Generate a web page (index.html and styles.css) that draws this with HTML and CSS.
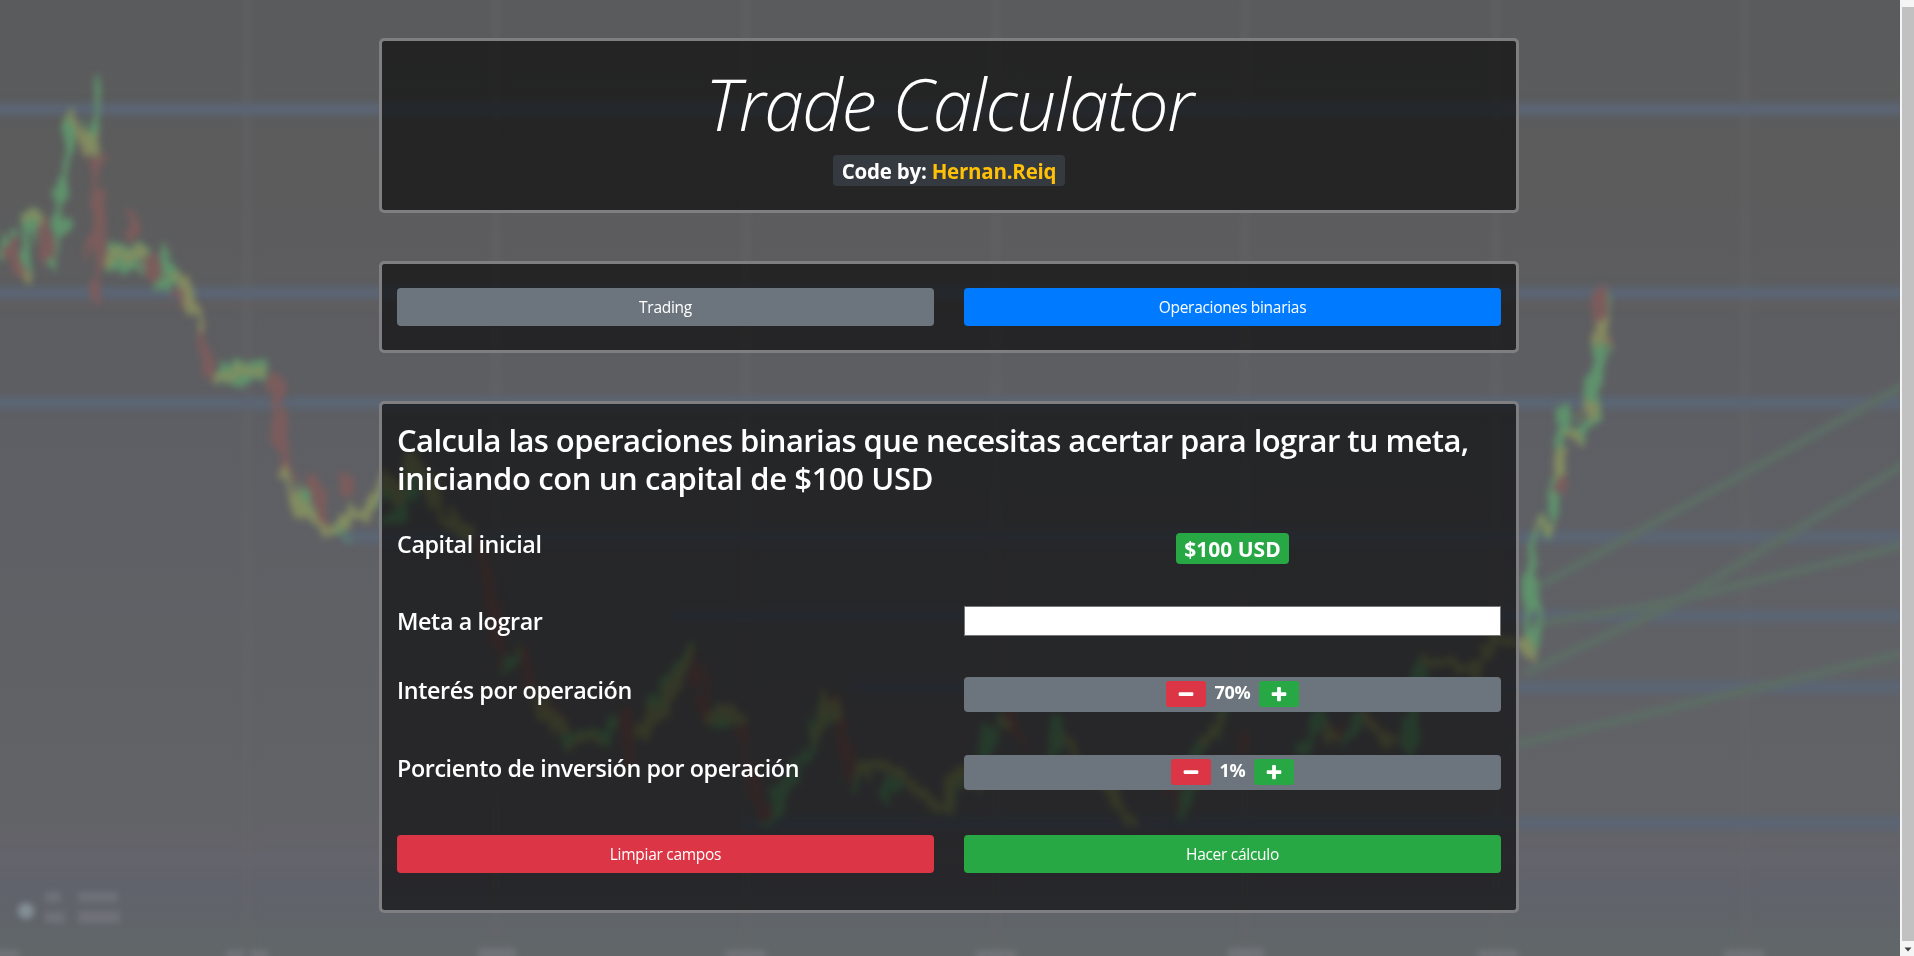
FILE: index.html
```
<!DOCTYPE html>
<html lang="es">
<head>
<meta charset="utf-8">
<title>Trade Calculator</title>
<link rel="stylesheet" href="styles.css">
</head>
<body>
<svg class="backdrop" viewBox="0 0 1900 956" preserveAspectRatio="none" aria-hidden="true">
  <defs>
    <linearGradient id="sky" x1="0" y1="0" x2="0" y2="1">
      <stop offset="0" stop-color="#5a5b5c"/>
      <stop offset=".2" stop-color="#5c5c5d"/>
      <stop offset=".45" stop-color="#5e5f64"/>
      <stop offset=".85" stop-color="#626367"/>
      <stop offset=".9" stop-color="#64636b"/>
      <stop offset=".93" stop-color="#60636b"/>
      <stop offset="1" stop-color="#616769"/>
    </linearGradient>
    <filter id="soft" color-interpolation-filters="sRGB" filterUnits="userSpaceOnUse" x="-20" y="-20" width="1940" height="1000">
      <feTurbulence type="fractalNoise" baseFrequency=".09 .03" numOctaves="2" seed="4" result="noise"/>
      <feDisplacementMap in="SourceGraphic" in2="noise" scale="26" xChannelSelector="A" yChannelSelector="G"/>
      <feGaussianBlur stdDeviation="3.6"/>
    </filter>
    <filter id="softer" color-interpolation-filters="sRGB" filterUnits="userSpaceOnUse" x="-20" y="-20" width="1940" height="1000"><feGaussianBlur stdDeviation="3"/></filter>
  </defs>
  <rect width="1900" height="956" fill="url(#sky)"/>
  <g filter="url(#softer)">
    <path stroke="#67686b" stroke-width="8" opacity=".35" d="M247-10V970M496-10V970M746-10V970M996-10V970M1245-10V970M1496-10V970M1745-10V970"/>
    <path stroke="#5b6573" stroke-width="13" d="M-10 109H1920M-10 293H1920M-10 403H1920M340 537H1920M672 616H1920M850 687H1920M740 823H1920"/>
    <path stroke="#655e5e" stroke-width="6" opacity=".6" d="M-10 304H1920"/>
    <path stroke="#66656e" stroke-width="10" opacity=".7" d="M-10 859H1920"/>
    <path stroke="#5d6c65" stroke-width="9" fill="none" d="M1525 594L1910 382M1525 673L1670 606L1910 461M1525 626L1664 603L1910 544M1510 746L1910 652"/>
  </g>
  <g filter="url(#soft)" fill="none" stroke-width="11" stroke-linejoin="round">
    <g stroke="#5f936c">
      <path d="M0 255L8 232M24 272L32 210M52 272L59 218L66 150L69 118M92 145L97 72M105 265L148 252M156 288L172 250M210 385L225 372L272 370M300 488L320 518M330 534L350 515M372 508L390 490M393 525L416 474M504 674L519 640M603 741L619 714M653 711L676 670L690 648M708 728L722 708M768 826L786 782L806 755L825 697M852 789L871 762M883 802L900 772M944 812L967 775M975 790L990 733L1003 708M1050 755L1059 718M1181 817L1200 750L1229 712M1300 753L1323 715M1342 747L1365 714M1405 755L1422 663M1530 655L1532 545L1545 525L1551 512L1562 440L1563 405M1575 438L1590 415L1598 370L1606 290"/>
      <path stroke-width="24" d="M108 260L148 256M222 374L270 370"/>
      <path stroke-width="18" d="M58 235L60 215M333 530L344 526M180 272L160 285M300 490L318 516M565 738L605 738M712 725L728 712M820 715L832 705"/>
    </g>
    <g>
      <path stroke="#7c5c5c" d="M9 240L22 282M38 215L48 265M75 122L88 150M97 155L98 305M133 212V240M148 255L154 278M180 290L190 308M200 318L206 352L210 380M274 372L282 440L288 475M310 475L326 528M348 472L350 500M473 535L488 575L500 650L503 670M519 640L533 690L561 728M624 714L632 765M693 655L703 694L708 725M741 725L756 795L770 820M830 697L845 740L852 780M1010 710L1024 750M1169 787L1180 812M1240 730V755M1335 725L1342 745M1372 718L1386 740M1600 290L1602 345M1558 480L1563 495"/>
    </g>
    <g stroke="#868d60" stroke-width="11" opacity=".9">
      <path d="M22 285L26 270M31 212L35 222M68 115L90 150L94 130M104 262L146 250M178 272L192 305L202 332M212 384L240 372L264 374M284 470L295 498L315 520L326 532L338 530L350 512L362 518L374 500L390 480L400 500L412 455L430 490L452 525L470 535M531 685L548 715L565 735M569 748L585 738L606 745M640 735L676 685L690 652M706 722L728 708L742 725M812 750L826 698L838 722M860 775L872 762L900 772L944 812L962 770L975 790M1000 712L1012 730M1060 735L1108 790L1131 827M1205 740L1225 720M1325 720L1338 745M1365 715L1395 748M1425 662L1449 660L1476 673L1491 640L1525 645L1532 660M1538 532L1546 520M1556 478L1562 448M1568 428L1578 442M1586 420L1591 400M1600 345L1603 318"/>
    </g>
  </g>
  <g filter="url(#softer)" fill="#7c7d83">
    <circle cx="26" cy="911" r="8" fill="#848f95"/>
    <path opacity=".55" d="M45 892h16v10H45zM78 892h40v10H78zM45 912h20v11H45zM78 911h42v12H78z"/>
    <path opacity=".6" d="M-5 950h24v10H-5zM226 950h18v10h-18zM250 950h18v10h-18zM478 948h38v12h-38zM726 950h40v10h-40zM976 950h40v10h-40zM1228 948h36v12h-36zM1478 950h40v10h-40zM1724 950h40v10h-40z"/>
  </g>
</svg>
<div class="window">
  <main class="page">
    <header class="card card-title">
      <h1 class="title">Trade Calculator</h1>
      <span class="badge badge-dark">Code by: <span class="author">Hernan.Reiq</span></span>
    </header>
    <nav class="card card-tabs">
      <button class="btn btn-secondary">Trading</button>
      <button class="btn btn-primary">Operaciones binarias</button>
    </nav>
    <section class="card card-form">
      <h2 class="heading">Calcula las operaciones binarias que necesitas acertar para lograr tu meta,<br><span class="heading-end">iniciando con un capital de $100 USD</span></h2>
      <div class="row row-capital">
        <h4 class="label">Capital inicial</h4>
        <div class="amount"><span class="badge badge-success">$100 USD</span></div>
      </div>
      <div class="row row-goal">
        <h4 class="label">Meta a lograr</h4>
        <input class="field" type="text" aria-label="Meta a lograr">
      </div>
      <div class="row row-interest">
        <h4 class="label">Interés por operación</h4>
        <div class="stepper">
          <button class="step minus" aria-label="Menos"><svg viewBox="0 0 16 16"><rect x=".7" y="6.2" width="14.6" height="3.8" rx="1"/></svg></button>
          <span class="value">70%</span>
          <button class="step plus" aria-label="Más"><svg viewBox="0 0 16 16"><path d="M7 1h2q.9 0 .9.9v4.3h4.5q.9 0 .9.9v2q0 .9-.9.9H9.900v4.300q0 .9-.9.9H7q-.9 0-.9-.9V10H1.600q-.9 0-.9-.9v-2q0-.9.9-.9h4.500V1.900Q6.100 1 7 1z"/></svg></button>
        </div>
      </div>
      <div class="row row-invest">
        <h4 class="label">Porciento de inversión por operación</h4>
        <div class="stepper">
          <button class="step minus" aria-label="Menos"><svg viewBox="0 0 16 16"><rect x=".7" y="6.2" width="14.6" height="3.8" rx="1"/></svg></button>
          <span class="value">1%</span>
          <button class="step plus" aria-label="Más"><svg viewBox="0 0 16 16"><path d="M7 1h2q.9 0 .9.9v4.3h4.5q.9 0 .9.9v2q0 .9-.9.9H9.900v4.300q0 .9-.9.9H7q-.9 0-.9-.9V10H1.600q-.9 0-.9-.9v-2q0-.9.9-.9h4.500V1.900Q6.100 1 7 1z"/></svg></button>
        </div>
      </div>
      <div class="row">
        <button class="btn btn-danger">Limpiar campos</button>
        <button class="btn btn-success">Hacer cálculo</button>
      </div>
    </section>
  </main>
  <div class="scrollbar" aria-hidden="true">
    <div class="thumb"></div>
    <svg class="arrow" viewBox="0 0 12 14"><path d="M2.500 6h7L6 10z"/></svg>
  </div>
</div>
</body>
</html>
```
FILE: styles.css
```
* { box-sizing: border-box; }

body {
  margin: 0;
  overflow: hidden;
  background: #5c5c5e;
  color: #fff;
  font-family: "Open Sans", "Noto Sans", sans-serif;
}

h1, h2, h4 { margin: 0; }

.backdrop {
  position: absolute;
  left: 0;
  top: 0;
  z-index: -1;
  width: 1900px;
  height: 956px;
}

.window { display: flex; height: 956px; }

.page {
  flex: 1;
  display: flex;
  flex-direction: column;
  align-items: center;
  gap: 48px;
  padding: 38px 2px 0 0;
}

.card {
  width: 1140px;
  padding: 0 15px;
  border: 3px solid #7f7f81;
  border-radius: 5px;
  background: rgba(0, 0, 0, .6);
  background-clip: padding-box;
}

.card-title {
  height: 175px;
  display: flex;
  flex-direction: column;
  align-items: center;
  padding-top: 20px;
}

.title {
  font-size: 71px;
  font-weight: 300;
  font-style: italic;
  line-height: 86px;
  letter-spacing: -1.4px;
}

.badge {
  display: block;
  height: 31px;
  padding: 0 8.400px;
  border-radius: 4px;
  font-weight: 700;
  line-height: 32px;
  white-space: nowrap;
}

.badge-dark {
  margin-top: 8px;
  background: #343a40;
  font-size: 20.5px;
  letter-spacing: -.22px;
}

.author { color: #ffc107; }

.badge-success { background: #28a745; font-size: 21px; }

.card-tabs {
  height: 92px;
  display: grid;
  grid-template-columns: 1fr 1fr;
  align-items: center;
  gap: 30px;
}

.btn {
  width: 100%;
  height: 38px;
  padding: 0 0 1px;
  border: 0;
  border-radius: 4px;
  color: #fff;
  font: 400 15.5px/36px "Open Sans", "Noto Sans", sans-serif;
  letter-spacing: -.28px;
}

.btn-secondary { background: #6c757d; }
.btn-primary { background: #007bff; }
.btn-danger { background: #dc3545; }
.btn-success { background: #28a745; }

.card-form { height: 512px; padding-top: 17px; }

.heading {
  height: 108px;
  font-size: 31px;
  font-weight: 600;
  line-height: 38.4px;
  letter-spacing: -.58px;
  white-space: nowrap;
}

.heading-end { letter-spacing: -.38px; }

.row {
  display: grid;
  grid-template-columns: 1fr 1fr;
  align-items: start;
  gap: 30px;
}

.row-capital { height: 77px; }
.row-goal { height: 69px; }
.row-interest { height: 78px; }
.row-invest { height: 82px; }

.label {
  padding-top: 1px;
  font-size: 23.3px;
  font-weight: 600;
  line-height: 28.8px;
  letter-spacing: -.39px;
}

.amount { display: flex; justify-content: center; padding-top: 4px; }

.field {
  width: 100%;
  height: 30px;
  border: 1px solid #767676;
  background: #fff;
}

.stepper {
  display: flex;
  justify-content: center;
  gap: 8px;
  height: 35px;
  margin-top: 2px;
  padding-top: 4px;
  border-radius: 4px;
  background: #6c757d;
}

.step {
  display: flex;
  align-items: center;
  justify-content: center;
  width: 40px;
  height: 26px;
  padding: 0;
  border: 0;
  border-radius: 3px;
}

.step svg { width: 16px; height: 16px; fill: #fff; }
.minus { background: #dc3545; }
.plus { background: #28a745; }

.value {
  font-size: 18px;
  font-weight: 700;
  line-height: 23px;
  letter-spacing: -.2px;
}

.scrollbar {
  display: flex;
  flex-direction: column;
  width: 14px;
  padding: 7px 0 0 2px;
  background: #f5f5f5;
}

.thumb { flex: 1; background: #c1c1c1; }
.arrow { width: 12px; height: 15px; fill: #404040; }
```
